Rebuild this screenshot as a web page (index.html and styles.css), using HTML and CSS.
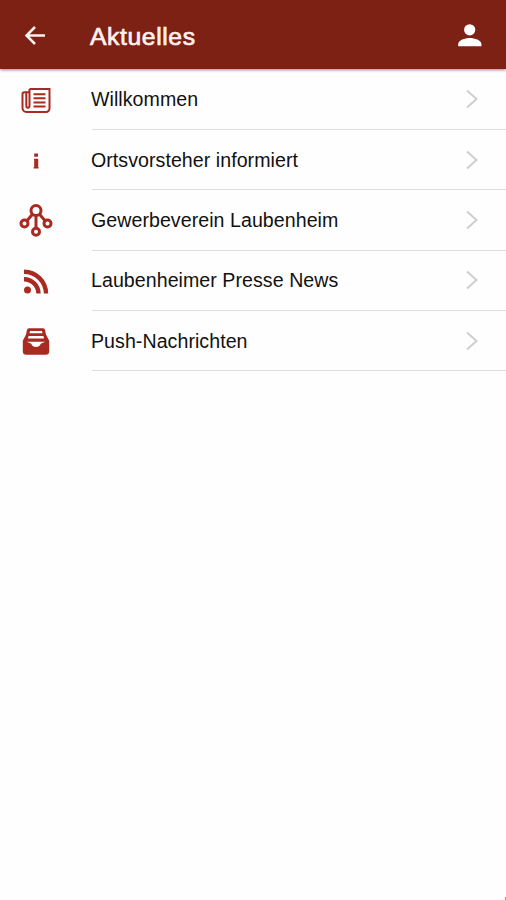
FILE: index.html
```html
<!DOCTYPE html>
<html lang="de">
<head>
  <meta charset="UTF-8">
  <title>Aktuelles</title>
  <link rel="stylesheet" href="styles.css">
</head>
<body>

  <!-- HEADER -->
  <header class="topbar">
    <svg class="back" width="24" height="24" viewBox="0 0 24 24">
      <path d="M21 11.500H3M11 3L2.500 11.500l8.500 8.500"/>
    </svg>
    <h1>Aktuelles</h1>
    <svg class="user" width="26" height="26" viewBox="0 0 26 26">
      <circle cx="12.700" cy="6.800" r="5.600"/>
      <path d="M1.200 23.300v-2C1.200 17.200 8 15 12.800 15s11.600 2.200 11.600 6.300v2z"/>
    </svg>
  </header>

  <!-- MENU -->
  <ul class="menu">
    <li>
      <svg class="icon" width="36" height="36" viewBox="0 0 36 36">
        <path class="thin" d="M11.500 6h20v19.500a3.500 3.500 0 0 1-3.500 3.500H8.500a4 4 0 0 1-4-4V11q0-1.700 1.700-1.700h5.300M8.300 10v12.500c0 3 3.200 3 3.200 0V6"/>
        <path class="thin" d="M15.500 11.200h12M15.500 15.200h12M15.500 19.400h12M15.500 23.600h12"/>
      </svg>
      <div class="row"><span>Willkommen</span><svg class="chevron" width="14" height="20" viewBox="0 0 14 20"><path d="M2 1.500l9.500 8.500L2 18.500"/></svg></div>
    </li>
    <li>
      <svg class="icon" width="36" height="36" viewBox="0 0 36 36">
        <path class="fill" d="M16.200 10.500h3.800v3.300h-3.800zM16 15.700h4.200v8.400h.4v1.400h-4.900v-1.400h.5V17H16z"/>
      </svg>
      <div class="row"><span>Ortsvorsteher informiert</span><svg class="chevron" width="14" height="20" viewBox="0 0 14 20"><path d="M2 1.500l9.500 8.500L2 18.500"/></svg></div>
    </li>
    <li>
      <svg class="icon" width="36" height="36" viewBox="0 0 36 36">
        <circle cx="18" cy="7.500" r="5"/>
        <circle cx="6.500" cy="20.500" r="3.500"/>
        <circle cx="29.500" cy="20.500" r="3.500"/>
        <circle cx="18" cy="28.800" r="3.500"/>
        <path d="M14.500 11.300l-5.600 6.400M21.500 11.300l5.600 6.400M18 12.500v12.700"/>
      </svg>
      <div class="row"><span>Gewerbeverein Laubenheim</span><svg class="chevron" width="14" height="20" viewBox="0 0 14 20"><path d="M2 1.500l9.500 8.500L2 18.500"/></svg></div>
    </li>
    <li>
      <svg class="icon" width="36" height="36" viewBox="0 0 36 36">
        <circle class="fill" cx="9.500" cy="26" r="3.500"/>
        <path class="wave" d="M6 15.300A14.500 14.500 0 0 1 20.500 29.500M6 7.700A22 22 0 0 1 28 29.500"/>
      </svg>
      <div class="row"><span>Laubenheimer Presse News</span><svg class="chevron" width="14" height="20" viewBox="0 0 14 20"><path d="M2 1.500l9.500 8.500L2 18.500"/></svg></div>
    </li>
    <li>
      <svg class="icon" width="36" height="36" viewBox="0 0 36 36">
        <path class="fill" d="M11 4.200h14a2 2 0 0 1 2 1.600l.9 4.400 1.600 3.200 1.700 3.300v10.500a3.500 3.500 0 0 1-3.500 3.500H8.300a3.500 3.500 0 0 1-3.500-3.500V16.700l1.700-3.300 1.600-3.200L9 5.800a2 2 0 0 1 2-1.600z"/>
        <path class="cut" d="M12 7h12l.5 2.300h-13zM10.600 12h14.800l.6 2.500H10zM8.800 17.800h18.400l-4.500 1.900c-1.200 4.400-8.200 4.400-9.400 0z"/>
      </svg>
      <div class="row"><span>Push-Nachrichten</span><svg class="chevron" width="14" height="20" viewBox="0 0 14 20"><path d="M2 1.500l9.500 8.500L2 18.500"/></svg></div>
    </li>
  </ul>

  <div class="corner"></div>

</body>
</html>
```

FILE: styles.css
```css
body {
  margin: 0;
  height: 900px;
  position: relative;
  overflow: hidden;
  background: #fefefe;
  color: #111;
  font-family: "Liberation Sans", Arial, sans-serif;
}

.topbar {
  display: flex;
  align-items: center;
  box-sizing: border-box;
  height: 69px;
  padding: 2px 23px 0 24px;
  background: #7e2115;
  box-shadow: 0 1px 3px rgba(0, 0, 0, 0.45);
}

.topbar h1 {
  flex: 1;
  margin: 2px 0 0 42px;
  color: #fdf0ee;
  font-size: 24.7px;
  font-weight: normal;
  letter-spacing: 0.6px;
  -webkit-text-stroke: 0.7px #fdf0ee;
}

.back {
  fill: none;
  stroke: #fdf0ee;
  stroke-width: 2.5;
}

.user {
  fill: #fff;
}

.menu {
  margin: 0;
  padding: 0.8px 0 0;
  list-style: none;
}

.menu li {
  display: flex;
  height: 60.3px;
}

.icon {
  margin: 13px 38px 0 18px;
  fill: none;
  stroke: #a92a20;
  stroke-width: 3;
}

.icon .thin {
  stroke-width: 2;
}

.icon .wave {
  stroke-width: 4.4;
}

.icon .fill {
  fill: #a92a20;
  stroke: none;
}

.icon .cut {
  fill: #fefefe;
  stroke: none;
}

.row {
  flex: 1;
  display: flex;
  align-items: center;
  justify-content: space-between;
  box-sizing: border-box;
  padding: 0 27px 0 0;
  border-bottom: 1px solid #dedede;
}

.row span {
  margin: 1px 0 0 -1px;
  font-size: 19.6px;
  letter-spacing: 0.05px;
}

.chevron {
  fill: none;
  stroke: #cfcfcf;
  stroke-width: 2;
}

.corner {
  position: absolute;
  right: 0;
  bottom: 0;
  width: 1px;
  height: 3px;
  background: #9c93a8;
}
```
